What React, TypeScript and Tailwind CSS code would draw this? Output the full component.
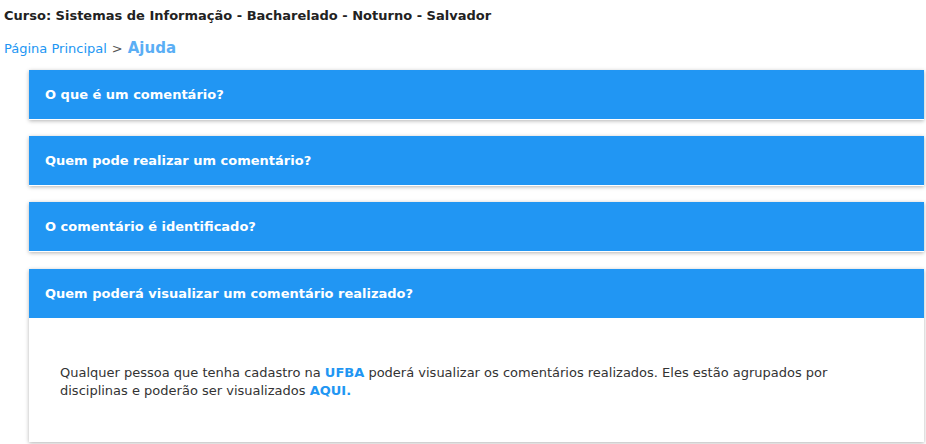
const faqs = [
  { q: "O que é um comentário?" },
  { q: "Quem pode realizar um comentário?" },
  { q: "O comentário é identificado?" },
  { q: "Quem poderá visualizar um comentário realizado?", open: true },
];

export default function App() {
  return (
    <div className="min-h-[444px] w-[926px] bg-white font-['DejaVu_Sans',Verdana,sans-serif] text-[13px] text-[#333]">
      <div className="flex h-[32px] items-center pl-[4px] font-bold text-[#222]">
        Curso: Sistemas de Informação - Bacharelado - Noturno - Salvador
      </div>
      <div className="flex h-[33px] items-center pl-[4px]">
        <a href="#" className="text-[#2196f3]">Página Principal</a>
        <span className="mx-[5px] text-[#555]">&gt;</span>
        <span className="text-[15px] font-bold text-[#5aaef5]">Ajuda</span>
      </div>
      <div className="ml-[29px] mr-[2px] mt-[5px] flex flex-col gap-[16px]">
        {faqs.map((f, i) => (
          <div
            key={f.q}
            className={`bg-white pb-px shadow-[0_1px_4px_rgba(0,0,0,0.3)] ${i === 3 ? "mt-px" : ""}`}
          >
            <div className="flex h-[49px] items-center bg-[#2196f3] px-[16px] font-bold text-white">
              {f.q}
            </div>
            {f.open && (
              <div className="px-[31px] pb-[41px] pt-[46px] leading-[18px] text-[#333]">
                Qualquer pessoa que tenha cadastro na{" "}
                <span className="font-bold text-[#2196f3]">UFBA</span> poderá visualizar os comentários
                realizados. Eles estão agrupados por disciplinas e poderão ser visualizados{" "}
                <a href="#" className="font-bold text-[#2196f3]">AQUI.</a>
              </div>
            )}
          </div>
        ))}
      </div>
    </div>
  );
}
